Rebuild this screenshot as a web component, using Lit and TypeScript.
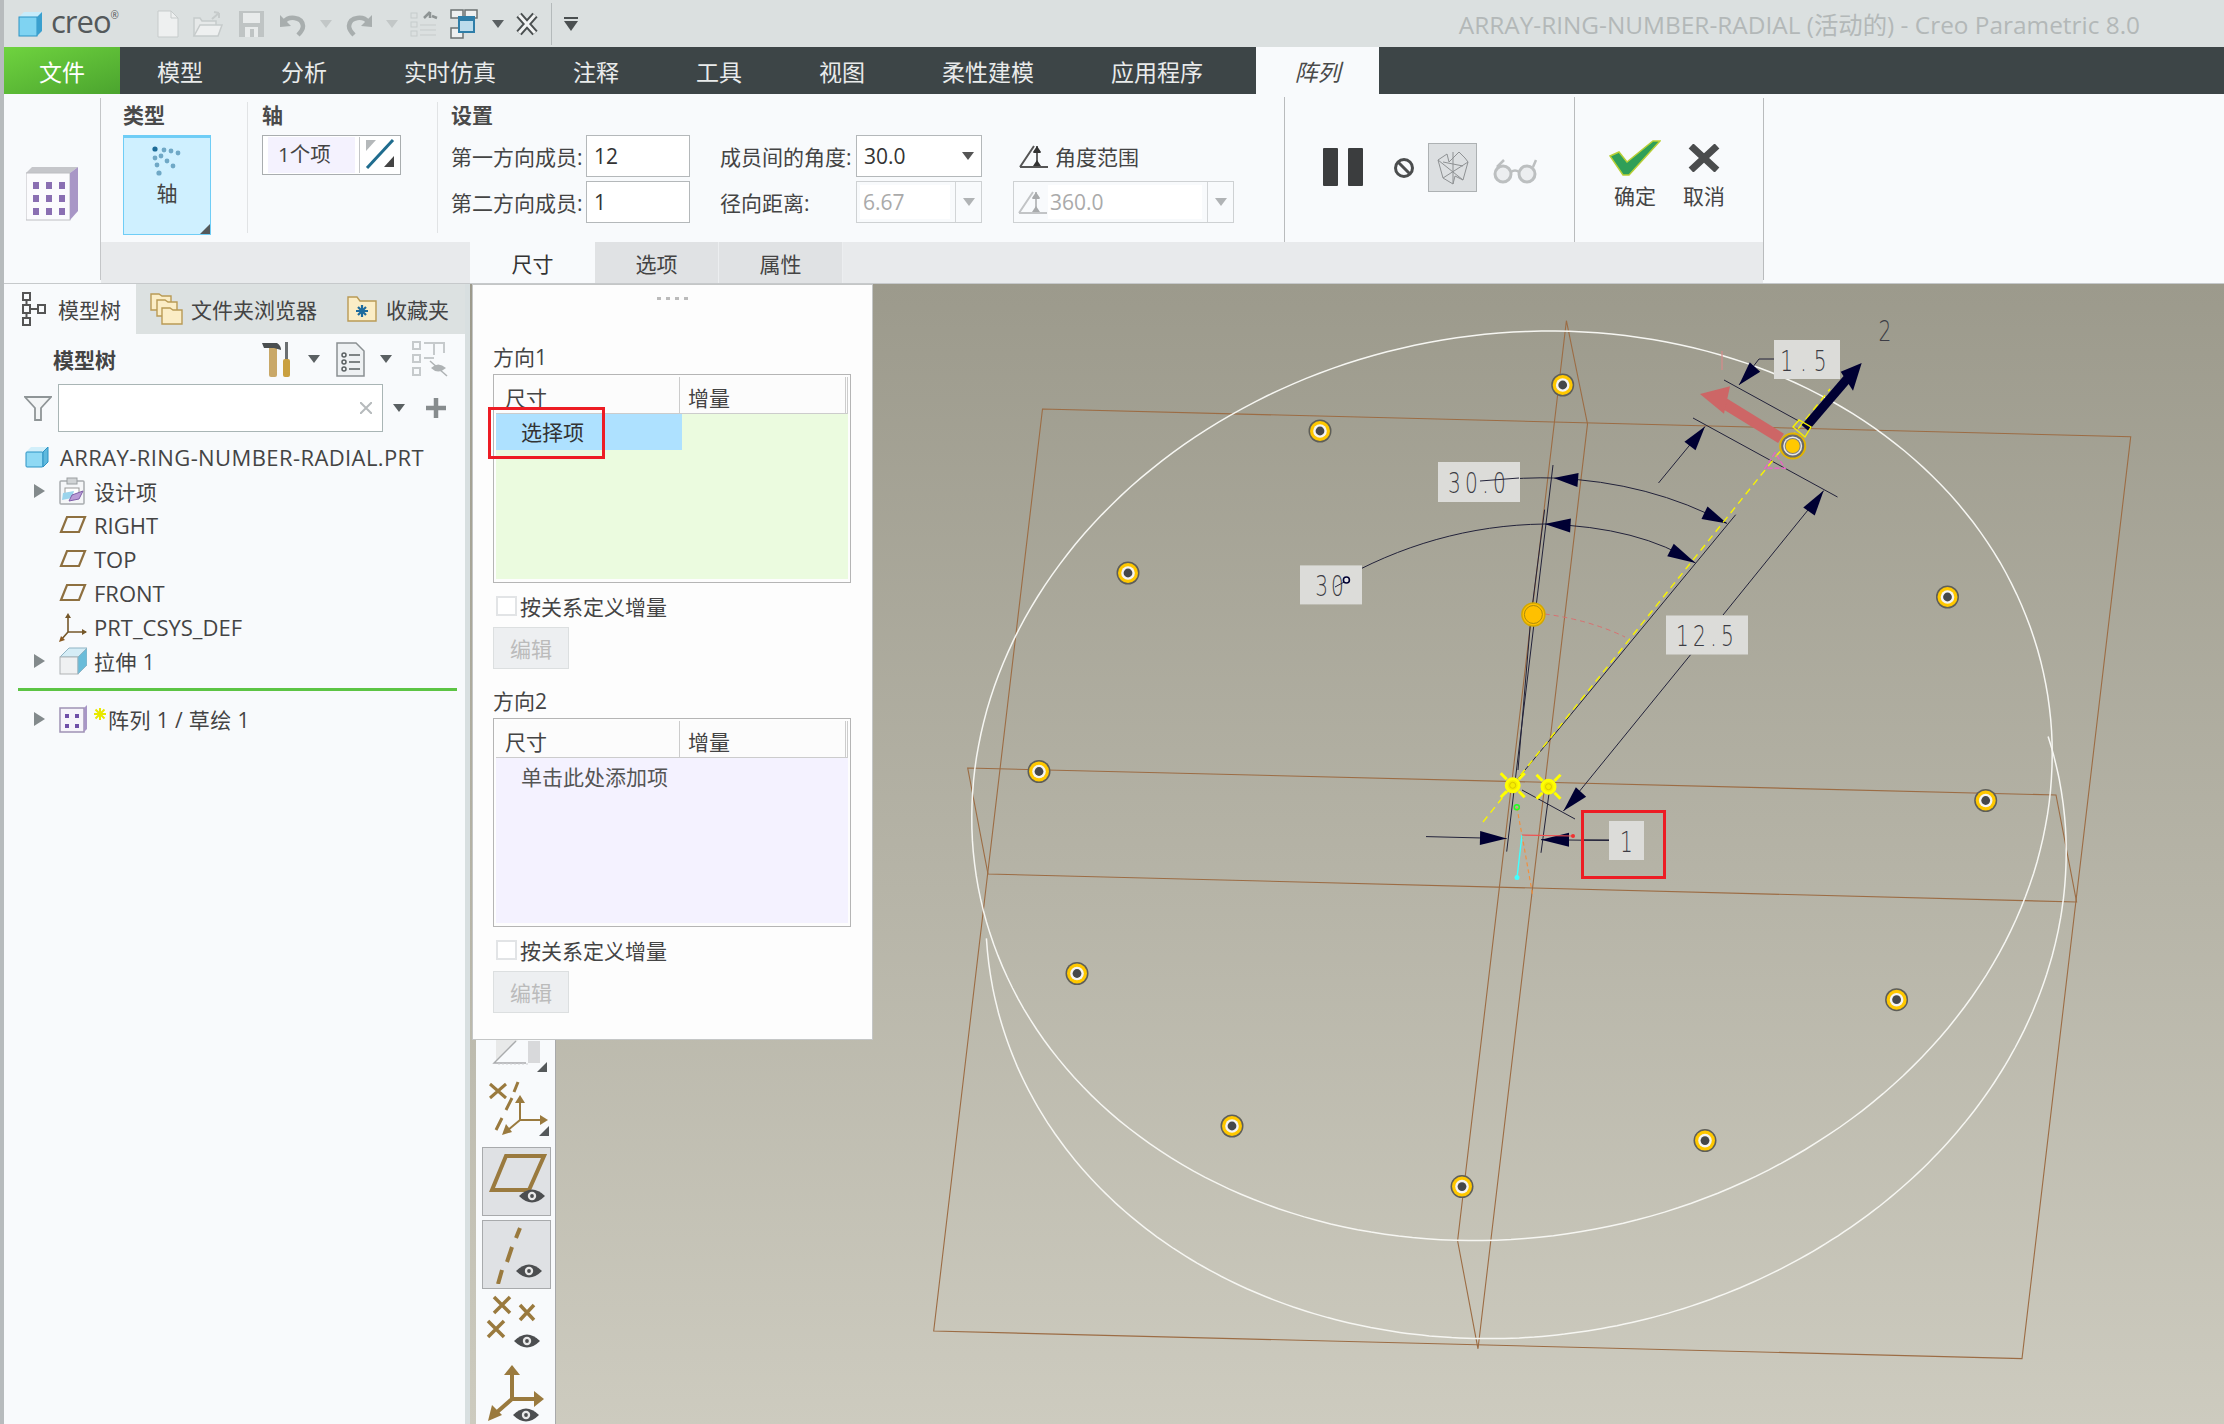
import { LitElement, html, svg, css } from "lit";
import { customElement } from "lit/decorators.js";

const C = { x: 1512, y: 785.8 };
const U = { x: 473.7, y: 14.7 };
const V = { x: 50.7, y: -400.8 };
const ellipse = (dx: number, dy: number, k: number, t0: number, t1: number) => {
  const pts: string[] = [];
  const n = 240;
  for (let i = 0; i <= n; i++) {
    const t = ((t0 + ((t1 - t0) * i) / n) * Math.PI) / 180;
    const x = C.x + dx + k * (U.x * Math.cos(t) + V.x * Math.sin(t));
    const y = C.y + dy + k * (U.y * Math.cos(t) + V.y * Math.sin(t));
    pts.push(`${x.toFixed(1)},${y.toFixed(1)}`);
  }
  return pts.join(" ");
};
const DOTS: [number, number][] = [
  [1562.7, 385], [1320, 431], [1128, 573], [1039, 771.5], [1077, 973.5], [1232, 1126],
  [1462, 1186.6], [1705, 1140.6], [1896.6, 999.7], [1985.7, 800.5], [1947.5, 597],
];
const marker = (x: number, y: number) => svg`<g>
  <circle cx=${x} cy=${y} r="11.5" fill="#5e5e58"/><circle cx=${x} cy=${y} r="10" fill="#ffc800"/>
  <circle cx=${x} cy=${y} r="6.8" fill="#f4f4f4"/><circle cx=${x} cy=${y} r="4.4" fill="#45474a"/></g>`;
const label = (x: number, y: number, w: number, h: number, t: string, sp = 6) => svg`
  <rect x=${x} y=${y} width=${w} height=${h} fill="#dcdcd9"/>
  <text class="dim" transform="translate(${x + w / 2} ${y + h / 2 + 11}) scale(.72 1)" text-anchor="middle" letter-spacing=${sp}>${t}</text>`;
const arrowHead = (tx: number, ty: number, bx: number, by: number, w: number, fill = "#000033") => {
  const dx = bx - tx, dy = by - ty, l = Math.hypot(dx, dy);
  const nx = (-dy / l) * w, ny = (dx / l) * w;
  return svg`<polygon fill=${fill} points="${tx},${ty} ${bx + nx},${by + ny} ${bx - nx},${by - ny}"/>`;
};
const star = (x: number, y: number) => svg`<g stroke="#ffff00" stroke-width="3" fill="none">
  <path d="M${x - 12} ${y - 12}L${x - 6} ${y - 6}M${x + 12} ${y - 12}L${x + 6} ${y - 6}M${x - 12} ${y + 12}L${x - 6} ${y + 6}M${x + 12} ${y + 12}L${x + 6} ${y + 6}"/>
  <circle cx=${x} cy=${y} r="6.5" fill="#f6ee00" stroke="#ffff00"/><circle cx=${x} cy=${y} r="3" fill="none" stroke="#d9c800" stroke-width="1"/></g>`;
const eye = (x: number, y: number) => svg`<g>
  <path d="M${x - 13} ${y}Q${x} ${y - 13} ${x + 13} ${y}Q${x} ${y + 13} ${x - 13} ${y}Z" fill="#4c4e50"/>
  <circle cx=${x} cy=${y} r="4.2" fill="#e8e8e8"/><circle cx=${x} cy=${y} r="1.9" fill="#4c4e50"/></g>`;
const tri = (w = 12, h = 8, fill = "#5a6062") => html`<svg class="ic" width=${w} height=${h} viewBox="0 0 12 8"><polygon points="0,0 12,0 6,8" fill=${fill}/></svg>`;
const corner = svg`<polygon points="10,0 10,10 0,10" fill="#55595b"/>`;

const planeIcon = html`<svg class="ic" width="28" height="20" viewBox="0 0 28 20"><polygon points="8,2 26,2 20,17 2,17" fill="none" stroke="#8e7040" stroke-width="2.2"/></svg>`;
const angleIcon = (c: string, c2: string) => html`<svg class="ic" width="30" height="26" viewBox="0 0 30 26">
  <path d="M1 24L15 3M1 24H29M15 3" stroke=${c} stroke-width="2" fill="none"/><path d="M18 3V23" stroke=${c2} stroke-width="1.5"/>
  <polygon points="18,9 14,3 22,3" transform="rotate(180 18 6)" fill=${c2}/><polygon points="18,17 14,23 22,23" fill=${c2}/><polygon points="18,4 14,10 22,10" fill=${c2}/></svg>`;

@customElement("app-root")
export class AppRoot extends LitElement {
  static styles = css`
    :host { display: block; width: 2224px; height: 1424px; overflow: hidden; position: relative;
      font-family: "Open Sans", "Noto Sans CJK SC", sans-serif; color: #444; font-size: 21px; background: #f8fafc; }
    * { box-sizing: border-box; }
    .ic { display: block; flex: none; }
    .shell { display: flex; flex-direction: column; height: 1424px; border-left: 4px solid #b7bbbd; }
    .title { height: 47px; background: #dbe0e0; display: flex; align-items: center; gap: 12px; padding-left: 14px; flex: none; }
    .logo { display: flex; align-items: center; gap: 7px; width: 118px; margin-right: 8px; }
    .creo { font-size: 31px; letter-spacing: -1px; color: #54595b; line-height: 1; font-family: "Open Sans", sans-serif; margin-top: -5px; }
    .creo sup { font-size: 10px; vertical-align: 14px; }
    .qsep { width: 1px; height: 42px; background: #b4babb; margin: 0 0 0 1px; }
    .doc-title { margin-left: auto; padding-right: 84px; color: #b3b8b8; font-size: 24.4px; }
    .tabs { height: 47px; background: #3d4547; display: flex; flex: none; }
    .tab { display: flex; align-items: center; justify-content: center; color: #e9ebeb; font-size: 23px; }
    .tab.file { background: linear-gradient(160deg, #6fd33f, #4ba42e); color: #fff; }
    .tab.on { background: #f8fafc; color: #4a4a4a; font-style: italic; margin-left: 12px; }
    .ribbon { height: 190px; background: #f8fafc; display: flex; flex: none; border-bottom: 1px solid #c6c9cb; }
    .rib-icon { width: 97px; padding: 69px 0 0 22px; border-right: 1px solid #c4c6c8; margin-top: 4px; margin-bottom: 3px; }
    .rib-body { width: 1662px; display: flex; flex-direction: column; }
    .rib-end { border-left: 1px solid #b9bbbd; margin: 4px 0 3px; flex: 1; }
    .groups { height: 148px; display: flex; }
    .g { padding-top: 9px; position: relative; }
    .g h4 { margin: 0; font-size: 21px; font-weight: 700; line-height: 24px; color: #4a4a4a; }
    .g-type { width: 146px; padding-left: 22px; }
    .typebtn { width: 88px; height: 100px; margin-top: 8px; background: #cff0ff; border: 1px solid #6fcdf6; border-top-width: 3px; display: flex; flex-direction: column; align-items: center; padding-top: 8px; position: relative; }
    .typebtn span { margin-top: 4px; font-size: 21px; line-height: 26px; }
    .typebtn .c { position: absolute; right: 0; bottom: 0; }
    .g-axis, .g-set { margin: 8px 0 9px; padding-top: 1px; border-left: 1px solid #e1e3e5; }
    .g-axis { width: 190px; padding-left: 14px; }
    .axisbox { margin-top: 8px; width: 139px; height: 40px; border: 1px solid #a9adaf; display: flex; padding: 1px; background: #fff; align-items: center; }
    .axisval { width: 88px; height: 36px; margin-left: 4px; background: #f4f2fe; padding-left: 10px; line-height: 34px; font-size: 20.5px; }
    .axisicon { border-left: 1px solid #c4c6c8; width: 40px; height: 36px; margin-left: 4px; padding: 2px 0 0 5px; }
    .g-set { width: 847px; padding-left: 13px; }
    .grid { display: grid; grid-template-columns: 135px 104px 166px 126px 252px; grid-auto-rows: 42px; row-gap: 4px; margin-top: 8px; }
    .lab { display: flex; align-items: center; white-space: nowrap; }
    .lab.m1 { padding-left: 30px; }
    .lab.m2 { padding-left: 37px; gap: 6px; }
    .inp { border: 1px solid #b4b8ba; background: #fff; display: flex; align-items: center; padding-left: 7px; font-size: 21px; color: #333; }
    .inp.sel { justify-content: space-between; padding-right: 7px; }
    .inp.dis { color: #aaa; border-color: #ced1d3; background: #f8fafc; padding: 0; }
    .inner { background: #fff; height: 34px; display: flex; align-items: center; margin-left: 3px; padding-left: 3px; flex: 1; }
    .carr { width: 26px; height: 100%; border-left: 1px solid #d2d5d7; margin-left: 5px; display: flex; align-items: center; justify-content: center; }
    .inp.dis.rangebox { margin-left: 31px; width: 221px; }
    .rangebox .pre { margin-left: 4px; }
    .rangebox .inner { margin-left: 0; padding-left: 2px; }
    .g-act { width: 290px; margin: 3px 0 0; border-left: 1px solid #b9bbbd; display: flex; align-items: flex-start; }
    .pause { margin: 51px 0 0 38px; }
    .nope { margin: 60px 0 0 30px; }
    .hl { margin: 46px 0 0 13px; width: 49px; height: 49px; background: #dcdfe1; border: 1px solid #adb1b3; display: flex; align-items: center; justify-content: center; }
    .glass { margin: 61px 0 0 15px; }
    .g-ok { flex: 1; margin: 3px 0 0; border-left: 1px solid #b9bbbd; display: flex; padding-left: 30px; gap: 9px; }
    .okc { width: 60px; display: flex; flex-direction: column; align-items: center; }
    .okc .b { height: 49px; margin-top: 36px; display: flex; align-items: center; }
    .okc span { margin-top: 0; line-height: 28px; }
    .strip { height: 41px; background: #e8eaec; padding-left: 369px; display: flex; }
    .st { width: 124px; display: flex; align-items: center; justify-content: center; background: #e0e2e4; border-right: 1px solid #eceef0; }
    .st.on { background: #f8fafc; border: 0; width: 125px; color: #333; }
    .main { flex: 1; display: flex; min-height: 0; }
    .side { width: 466px; flex: none; display: flex; border-right: 5px solid #d8dfe0; }
    .sidein { width: 461px; background: #f8fafc; position: relative; }
    .ptabs { height: 50px; display: flex; background: #dce1e1; }
    .ptab { display: flex; align-items: center; gap: 12px; white-space: nowrap; }
    .ptab.a { width: 132px; background: #f8fafc; padding-left: 18px; }
    .ptab.b { width: 197px; padding-left: 14px; gap: 7px; }
    .ptab.c { padding-left: 14px; gap: 9px; }
    .tools { height: 50px; display: flex; align-items: center; padding-left: 49px; }
    .tools b { width: 209px; font-size: 21px; font-weight: 700; }
    .tools .t1 { margin-left: 0; } .tools .t2 { margin-left: 16px; } .tools .t3 { margin-left: 16px; } .tools .t4 { margin-left: 15px; } .tools .t5 { margin-left: 20px; }
    .filter { display: flex; align-items: center; padding-left: 20px; height: 48px; }
    .search { width: 325px; height: 48px; border: 1px solid #a9b5b5; background: #fff; margin-left: 6px; display: flex; align-items: center; justify-content: flex-end; padding-right: 10px; margin-right: 10px; }
    .plus { margin-left: 21px; }
    .tree { margin-top: 8px; }
    .row { height: 34px; display: flex; align-items: center; white-space: nowrap; }
    .row .ar { width: 55px; padding-left: 29px; flex: none; }
    .row .i { width: 35px; flex: none; }
    .row.root { padding-left: 21px; gap: 11px; }
    .lat { font-size: 22px; }
    .lat.wide { letter-spacing: .4px; }
    .feat { letter-spacing: .4px; }
    .hr { height: 3px; background: #5cc444; margin: 10px 8px 11px 14px; }
    .yst { margin-right: 2px; align-self: flex-start; margin-top: 6px; }
    .vp { flex: 1; position: relative; background: linear-gradient(#9c9a8c, #cdcbbf); overflow: hidden; }
    .canvas { position: absolute; left: 0; top: 0; }
    .dim { font-family: "DejaVu Sans", sans-serif; font-weight: 200; font-size: 28px; fill: #3c3c44; }
    .vbar { position: absolute; left: 6px; top: 0; width: 80px; bottom: 0; background: #f8fafc; padding: 756px 0 0 6px; border-right: 1px solid #a8a9aa; }
    .vb { width: 69px; height: 69px; display: flex; align-items: center; justify-content: center; }
    .vb.on { background: #dfe1e4; border: 1px solid #a8aaac; margin-bottom: 4px; }
    .vb.top { height: 40px; align-items: flex-start; }
    .vb.pts { height: 60px; margin-bottom: 7px; }
    .vb.three { height: 66px; margin: 3px 0 6px; }
    .vb.csys { height: 60px; }
    .popup { position: absolute; left: 2px; top: 0; width: 401px; height: 756px; background: #fdfdfd; border: 1px solid #c4c6c6; padding: 0 20px; }
    .grip { display: flex; gap: 5px; justify-content: center; padding-top: 12px; height: 61px; }
    .grip i { width: 4px; height: 3px; background: #bbb; }
    .dlab { line-height: 22px; }
    .tbl { height: 209px; width: 358px; border: 1px solid #b5b5b5; margin-top: 6px; padding: 2px 2px 3px; display: flex; flex-direction: column; }
    .thead { height: 37px; display: flex; background: #fcfcfc; border-bottom: 1px solid #ccc; flex: none; line-height: 42px; }
    .thead div:first-child { width: 184px; padding-left: 9px; border-right: 1px solid #ccc; }
    .thead div:nth-child(2) { flex: 1; padding-left: 8px; border-right: 3px double #ccc; }
    .tbody { flex: 1; }
    .tbody.g1 { background: #ebfbdf; }
    .tbody.g2 { background: #f4f2ff; padding: 7px 0 0 25px; line-height: 24px; color: #555; }
    .seld { width: 186px; height: 36px; background: #aee1ff; padding-left: 25px; line-height: 37px; color: #333; }
    .redbox { position: absolute; left: 15px; top: 122px; width: 117px; height: 52px; border: 3px solid #ed1c24; }
    .chk { display: flex; align-items: center; gap: 3px; height: 22px; margin-top: 12px; padding-left: 3px; }
    .chk i { width: 21px; height: 20px; background: #fff; border: 2px solid #e2e4e6; }
    .btn { width: 76px; height: 42px; background: #edeff1; border: 1px solid #dcdfe0; color: #bbb; display: flex; align-items: center; justify-content: center; margin-top: 10px; margin-bottom: 21px; }
  `;

  render() {
    const tabs: [string, number][] = [["模型", 120], ["分析", 128], ["实时仿真", 164], ["注释", 128], ["工具", 118], ["视图", 128], ["柔性建模", 164], ["应用程序", 174]];
    return html`<div class="shell">
      ${this.titleBar()}
      <div class="tabs">
        <div class="tab file" style="width:116px">文件</div>
        ${tabs.map(([t, w]) => html`<div class="tab" style="width:${w}px">${t}</div>`)}
        <div class="tab on" style="width:123px">阵列</div>
      </div>
      ${this.ribbon()}
      <div class="main">
        ${this.side()}
        <div class="vp">
          ${this.canvas()}
          ${this.vbar()}
          ${this.popup()}
        </div>
      </div>
    </div>`;
  }

  titleBar() {
    const g = "#c6cbcb", g2 = "#a8aeae";
    return html`<div class="title">
      <div class="logo">
        <svg class="ic" width="26" height="26" viewBox="0 0 26 26"><polygon points="1,6 6,1 24,1 19,6" fill="#c7ecfb"/><rect x="1" y="6" width="18" height="19" fill="#7fd3f2" stroke="#2d93c4"/><polygon points="19,6 24,1 24,20 19,25" fill="#3aa0cf"/></svg>
        <span class="creo">creo<sup>®</sup></span>
      </div>
      <svg class="ic" width="24" height="28" viewBox="0 0 24 28"><path d="M2 1H15L22 8V27H2Z" fill="#eef0f0" stroke=${g}/><path d="M15 1V8H22" fill="none" stroke=${g}/></svg>
      <svg class="ic" width="34" height="28" viewBox="0 0 34 28"><path d="M2 26V8H8L10 11H24V15" fill="#e6e9e9" stroke=${g} stroke-width="1.5"/><path d="M2 26L8 15H30L26 26Z" fill="#eef0f0" stroke=${g} stroke-width="1.5"/><path d="M20 9L27 3M27 3L22 2M27 3V8" stroke=${g} stroke-width="2" fill="none"/></svg>
      <svg class="ic" width="28" height="28" viewBox="0 0 28 28"><rect x="1" y="1" width="25" height="26" fill="#bfc4c4"/><rect x="5" y="3" width="17" height="10" fill="#e8ebeb"/><rect x="7" y="17" width="13" height="10" fill="#e8ebeb"/><rect x="12" y="19" width="4" height="8" fill="#bfc4c4"/></svg>
      <svg class="ic" width="30" height="28" viewBox="0 0 30 28"><path d="M6 12C10 6 24 6 25 16C25 20 22 23 20 25" fill="none" stroke=${g2} stroke-width="4.5"/><polygon points="2,5 13,16 2,17" fill=${g2}/></svg>
      ${tri(12, 8, "#c2c7c7")}
      <svg class="ic" width="30" height="28" viewBox="0 0 30 28"><path d="M24 12C20 6 6 6 5 16C5 20 8 23 10 25" fill="none" stroke=${g2} stroke-width="4.5"/><polygon points="28,5 17,16 28,17" fill=${g2}/></svg>
      ${tri(12, 8, "#c2c7c7")}
      <svg class="ic" width="28" height="28" viewBox="0 0 28 28"><g fill="none" stroke=${g}><rect x="1" y="3" width="6" height="5"/><rect x="1" y="12" width="6" height="5"/><rect x="1" y="21" width="6" height="5"/><path d="M10 15H26M10 20H26M10 25H26"/></g><path d="M14 8L20 2M20 2V8M22 6L27 8" stroke="#8e9494" stroke-width="2.5" fill="none"/></svg>
      <svg class="ic" width="30" height="30" viewBox="0 0 30 30"><g fill="#eef0f0" stroke="#6c7272" stroke-width="1.5"><rect x="1" y="1" width="12" height="8"/><rect x="15" y="1" width="12" height="8"/><rect x="1" y="19" width="12" height="10"/></g><rect x="9" y="8" width="15" height="15" fill="#bcdcec" stroke="#2f7ea8" stroke-width="2"/><rect x="9" y="8" width="15" height="4" fill="#2f7ea8"/></svg>
      ${tri(12, 8)}
      <svg class="ic" width="22" height="26" viewBox="0 0 22 26"><path d="M3 4L19 22M19 4L3 22" stroke="#4a4f50" stroke-width="7"/><path d="M3 4L19 22M19 4L3 22" stroke="#f2f4f4" stroke-width="3"/></svg>
      <div class="qsep"></div>
      <svg class="ic" width="14" height="16" viewBox="0 0 14 16"><rect y="1" width="14" height="2" fill="#4a4f50"/><polygon points="0,5 14,5 7,15" fill="#4a4f50"/></svg>
      <div class="doc-title">ARRAY-RING-NUMBER-RADIAL (活动的) - Creo Parametric 8.0</div>
    </div>`;
  }

  ribbon() {
    return html`<div class="ribbon">
      <div class="rib-icon">
        <svg class="ic" width="52" height="54" viewBox="0 0 52 54"><polygon points="0,6 6,0 52,0 44,6" fill="#c5c6ca"/><rect x="0" y="6" width="44" height="47" fill="#fbfbfd" stroke="#bdbec2"/><polygon points="44,6 52,0 52,44 44,53" fill="#a896c6"/>
          ${[0, 1, 2].map(r => [0, 1, 2].map(c => svg`<rect x=${7 + c * 13} y=${15 + r * 13} width="6" height="7" fill="#8a6fb2"/>`))}</svg>
      </div>
      <div class="rib-body">
        <div class="groups">
          <div class="g g-type"><h4>类型</h4>
            <div class="typebtn">
              <svg class="ic" width="30" height="30" viewBox="0 0 30 30"><g fill="#6fa8c6">
                <circle cx="3" cy="3" r="2.6" fill="#1b6b98"/><circle cx="12" cy="4" r="2.4"/><circle cx="19" cy="5" r="2.4"/><circle cx="26" cy="7" r="2.4"/>
                <circle cx="3" cy="12" r="2.4"/><circle cx="9" cy="10" r="2.4"/><circle cx="15" cy="15" r="2.4"/><circle cx="21" cy="20" r="2.4"/><circle cx="5" cy="19" r="2.4"/><circle cx="7" cy="27" r="2.6"/></g></svg>
              <span>轴</span>
              <svg class="ic c" width="10" height="10" viewBox="0 0 10 10">${corner}</svg>
            </div>
          </div>
          <div class="g g-axis"><h4>轴</h4>
            <div class="axisbox"><div class="axisval">1个项</div><div class="axisicon">
              <svg class="ic" width="30" height="30" viewBox="0 0 30 30"><path d="M28 1L2 29" stroke="#1f6c8e" stroke-width="3"/><polygon points="1,1 11,1 1,12" fill="#b4b8ba"/><polygon points="29,28 19,28 29,17" fill="#444"/></svg>
            </div></div>
          </div>
          <div class="g g-set"><h4>设置</h4>
            <div class="grid">
              <div class="lab">第一方向成员:</div><div class="inp">12</div>
              <div class="lab m1">成员间的角度:</div><div class="inp sel">30.0 ${tri(12, 8, "#555")}</div>
              <div class="lab m2">${angleIcon("#555", "#333")}角度范围</div>
              <div class="lab">第二方向成员:</div><div class="inp">1</div>
              <div class="lab m1">径向距离:</div>
              <div class="inp dis"><div class="inner">6.67</div><div class="carr">${tri(12, 8, "#b0b3b5")}</div></div>
              <div class="inp dis rangebox"><div class="pre">${angleIcon("#c2c4c6", "#a8aaac")}</div><div class="inner">360.0</div><div class="carr">${tri(12, 8, "#b0b3b5")}</div></div>
            </div>
          </div>
          <div class="g-act">
            <svg class="ic pause" width="40" height="38" viewBox="0 0 40 38"><rect width="15" height="38" rx="1" fill="#3b3d3e"/><rect x="25" width="15" height="38" rx="1" fill="#3b3d3e"/></svg>
            <svg class="ic nope" width="22" height="22" viewBox="0 0 22 22"><circle cx="11" cy="11" r="8.5" fill="none" stroke="#4b4d4e" stroke-width="3"/><path d="M5 5L17 17" stroke="#4b4d4e" stroke-width="3"/></svg>
            <div class="hl"><svg class="ic" width="36" height="36" viewBox="0 0 36 36"><g fill="none" stroke="#8e9193" stroke-width="1"><path d="M3 10L12 4L14 12L24 2L30 8L33 12L28 30L20 26L18 34L8 28Z"/><path d="M3 10L28 30M33 12L8 28M18 2V34M8 12L28 16"/></g></svg></div>
            <svg class="ic glass" width="46" height="26" viewBox="0 0 46 26"><g fill="#eceef0" stroke="#bcbfc0" stroke-width="3"><circle cx="11" cy="16" r="8"/><circle cx="35" cy="16" r="8"/></g><path d="M19 14Q23 11 27 14M5 9L12 2M41 9L44 2" stroke="#bcbfc0" stroke-width="2.5" fill="none"/></svg>
          </div>
          <div class="g-ok">
            <div class="okc"><div class="b"><svg class="ic" width="52" height="36" viewBox="0 0 52 36"><polygon points="1,16 10,12 18,22 44,1 51,1 20,35 14,35" fill="#2f9f58" stroke="#b8cf35" stroke-width="1.5"/></svg></div><span>确定</span></div>
            <div class="okc"><div class="b"><svg class="ic" width="34" height="28" viewBox="0 0 34 28"><path d="M4 2L30 26M30 2L4 26" stroke="#4a4c4d" stroke-width="7"/></svg></div><span>取消</span></div>
          </div>
        </div>
        <div class="strip"><div class="st on">尺寸</div><div class="st">选项</div><div class="st">属性</div></div>
      </div>
      <div class="rib-end"></div>
    </div>`;
  }

  side() {
    const fold = (x: number, y: number, c = "#fbedc6") => svg`<path d="M${x} ${y + 18}V${y + 2}H${x + 8}L${x + 11} ${y + 4}H${x + 20}V${y + 18}Z" fill=${c} stroke="#b99a55" stroke-width="1.4"/>`;
    const ar = html`<svg class="ic" width="13" height="16" viewBox="0 0 13 16"><polygon points="1,1 12,8 1,15" fill="#838a8c"/></svg>`;
    return html`<div class="side"><div class="sidein">
      <div class="ptabs">
        <div class="ptab a"><svg class="ic" width="24" height="34" viewBox="0 0 24 34"><g fill="none" stroke="#555" stroke-width="2"><rect x="1" y="1" width="7" height="7"/><rect x="1" y="13" width="7" height="8"/><rect x="16" y="13" width="7" height="8"/><rect x="1" y="26" width="7" height="7"/><path d="M4.5 8V13M4.5 21V26M8 17H16"/></g></svg>模型树</div>
        <div class="ptab b"><svg class="ic" width="34" height="34" viewBox="0 0 34 34">${fold(1, 0)}${fold(7, 6)}${fold(12, 14)}</svg>文件夹浏览器</div>
        <div class="ptab c"><svg class="ic" width="30" height="28" viewBox="0 0 30 28"><path d="M1 26V2H10L13 6H29V26Z" fill="#fbedc6" stroke="#b99a55" stroke-width="1.4"/><path d="M15 10V22M9 16H21M11 12L19 20M19 12L11 20" stroke="#1f6c9e" stroke-width="2.2"/></svg>收藏夹</div>
      </div>
      <div class="tools">
        <b>模型树</b>
        <svg class="ic t1" width="30" height="36" viewBox="0 0 30 36"><rect x="7" y="5" width="8" height="31" rx="2" fill="#c9a868"/><path d="M0 2H15C18 4 19 6 19 9L12 7H2Z" fill="#4a4e50"/><rect x="23" y="1" width="3" height="17" fill="#6c7072"/><rect x="21" y="18" width="7" height="18" rx="2" fill="#c9a040"/></svg>
        <span class="t2">${tri(12, 8)}</span>
        <svg class="ic t3" width="29" height="35" viewBox="0 0 29 35"><path d="M1 1H20L28 9V34H1Z" fill="#eef1f3" stroke="#8a9092" stroke-width="1.5"/><g stroke="#5a6062" stroke-width="1.5" fill="none"><circle cx="8" cy="13" r="2"/><circle cx="8" cy="20" r="2"/><circle cx="8" cy="27" r="2"/><path d="M13 13H24M13 20H24M13 27H24"/></g></svg>
        <span class="t4">${tri(12, 8)}</span>
        <svg class="ic t5" width="36" height="36" viewBox="0 0 36 36"><g fill="none" stroke="#c6cacc" stroke-width="2"><rect x="1" y="1" width="7" height="7"/><rect x="1" y="14" width="7" height="7"/><rect x="1" y="27" width="7" height="7"/><path d="M12 2H32V12M22 2V14M12 17H22"/></g><path d="M18 20L35 35" stroke="#aeb2b4" stroke-width="1.5"/><path d="M19 27Q26 20 34 27Q26 34 19 27Z" fill="#aeb2b4"/></svg>
      </div>
      <div class="filter">
        <svg class="ic" width="28" height="25" viewBox="0 0 28 25"><path d="M1 1H27L17 12V24H11V12Z" fill="#f3f5f6" stroke="#8f9597" stroke-width="1.8"/></svg>
        <div class="search"><svg class="ic" width="12" height="12" viewBox="0 0 12 12"><path d="M0 0L12 12M12 0L0 12" stroke="#b6babc" stroke-width="2"/></svg></div>
        ${tri(12, 8)}
        <svg class="ic plus" width="20" height="20" viewBox="0 0 20 20"><path d="M10 0V20M0 10H20" stroke="#878c8e" stroke-width="4.5"/></svg>
      </div>
      <div class="tree">
        <div class="row root"><svg class="ic" width="24" height="22" viewBox="0 0 24 22"><polygon points="1,6 6,1 23,1 18,6" fill="#d2effa"/><rect x="1" y="6" width="17" height="15" rx="1" fill="#8fd9f4" stroke="#2d93c4"/><polygon points="18,6 23,1 23,16 18,21" fill="#5fb9dd" stroke="#2d93c4"/></svg><span class="lat wide">ARRAY-RING-NUMBER-RADIAL.PRT</span></div>
        <div class="row"><div class="ar">${ar}</div><div class="i"><svg class="ic" width="26" height="28" viewBox="0 0 26 28"><rect x="1" y="4" width="24" height="23" rx="1" fill="#f5f6f8" stroke="#a8acae" stroke-width="1.5"/><rect x="8" y="1" width="10" height="6" fill="#d0d3d5" stroke="#9a9ea0"/><rect x="6" y="11" width="14" height="8" fill="#fff" stroke="#999"/><polygon points="4,16 15,14 13,21 3,23" fill="#9bd4ec"/><polygon points="13,18 24,14 20,22 10,24" fill="#b99bd6" stroke="#7f5fa8"/></svg></div>设计项</div>
        <div class="row"><div class="ar"></div><div class="i">${planeIcon}</div><span class="lat">RIGHT</span></div>
        <div class="row"><div class="ar"></div><div class="i">${planeIcon}</div><span class="lat">TOP</span></div>
        <div class="row"><div class="ar"></div><div class="i">${planeIcon}</div><span class="lat">FRONT</span></div>
        <div class="row"><div class="ar"></div><div class="i"><svg class="ic" width="28" height="29" viewBox="0 0 28 29"><path d="M9 3V19M9 19H27M9 19L2 27" stroke="#75582a" stroke-width="1.6" fill="none"/><polygon points="9,0 6,5 12,5" fill="#75582a"/><polygon points="28,19 23,16 23,22" fill="#75582a"/><polygon points="0,29 6,27 2,23" fill="#8a5a22"/></svg></div><span class="lat">PRT_CSYS_DEF</span></div>
        <div class="row"><div class="ar">${ar}</div><div class="i"><svg class="ic" width="28" height="28" viewBox="0 0 28 28"><polygon points="1,10 10,1 28,1 19,10" fill="#d5edf6" stroke="#8fb4c4"/><rect x="1" y="10" width="18" height="17" fill="#eff1f2" stroke="#b0b3b5"/><polygon points="19,10 28,1 28,18 19,27" fill="#69bcd9" stroke="#8fb4c4"/></svg></div><span class="feat">拉伸 1</span></div>
        <div class="hr"></div>
        <div class="row"><div class="ar">${ar}</div><div class="i"><svg class="ic" width="28" height="28" viewBox="0 0 28 28"><rect x="1" y="3" width="24" height="24" fill="#f6f4fa" stroke="#9f92b4" stroke-width="1.5"/><polygon points="25,3 28,0 28,24 25,27" fill="#a896c6"/>${[0, 1].map(r => [0, 1].map(c => svg`<rect x=${6 + c * 10} y=${9 + r * 10} width="4" height="4" fill="#6f4fa8"/>`))}</svg></div>
          <svg class="ic yst" width="12" height="12" viewBox="0 0 12 12"><path d="M6 0V12M0 6H12M1.5 1.5L10.5 10.5M10.5 1.5L1.5 10.5" stroke="#e8e800" stroke-width="2"/></svg><span class="feat">阵列 1 / 草绘 1</span></div>
      </div>
    </div></div>`;
  }

  canvas() {
    const brown = "#9c6c44";
    const dk = "#22223a";
    return html`<svg class="canvas" width="1754" height="1140" viewBox="470 284 1754 1140">
      <g fill="none" stroke=${brown} stroke-width="1.1">
        <polygon points="1042.5,409 2130.7,436.7 2022,1358.6 933.7,1331"/>
        <polygon points="967.7,768 2056,795 2076.6,902 988,874"/>
        <polygon points="1566.4,320.7 1587.5,424 1478,1348.8 1457.6,1240.8"/>
      </g>
      <g fill="none" stroke="#f6f6f2" stroke-width="1.5">
        <polyline points=${ellipse(0, 0, 1.134, 0, 360)}/>
        <polyline points=${ellipse(14, 98, 1.134, 21, -171)}/>
      </g>
      ${DOTS.map(([x, y]) => marker(x, y))}
      <g fill="none" stroke=${dk} stroke-width="1">
        <path d="M1553 465L1506.7 851.6M1544.6 509.6L1531 616L1518 770"/>
        <path d="M1550 786L1541 852.8"/>
        <path d="M1735.7 514.7L1518 778.5" />
        <path d="M1724 380L1798 420.6M1693 418L1837.5 497M1522 790L1575 819"/>
        <path d="M1774.5 359H1759L1739 385M1705 426.5L1658.5 483"/>
        <path d="M1823.7 490.6L1723 615M1690.6 654.7L1563.4 811"/>
        <path d="M1426 836.6L1506.7 838.6M1541 839.7L1609.4 840.5"/>
        <path d="M1480 481Q1530 477 1553.6 478Q1650 482 1727 523.4"/>
        <path d="M1335 582.7C1400 545 1470 525 1544.6 524Q1640 527 1695.5 563"/>
      </g>
      ${arrowHead(1739, 385, 1755, 367, 7)}
      ${arrowHead(1705, 426.5, 1690, 446, 7)}
      ${arrowHead(1553.6, 478, 1578, 480, 7)}
      ${arrowHead(1727, 523.4, 1704.5, 512.7, 7)}
      ${arrowHead(1544.6, 524, 1570.5, 525.4, 7)}
      ${arrowHead(1695.5, 563, 1670.5, 550, 7)}
      ${arrowHead(1823.7, 490.6, 1809, 511.5, 7)}
      ${arrowHead(1563.4, 811, 1581, 792, 7)}
      ${arrowHead(1506.7, 838.6, 1480, 838, 7)}
      ${arrowHead(1541, 839.7, 1569, 839.7, 7)}
      <path d="M1483 822L1830 389" stroke="#f8f400" stroke-width="1.4" stroke-dasharray="7 5" fill="none"/>
      <path d="M1544.6 614Q1590 620 1625 637" stroke="#d87070" stroke-width="1" stroke-dasharray="5 4" fill="none"/>
      <path d="M1722 351V370" stroke="#d88a8a" stroke-width="1.2"/>
      <path d="M1781 438.4L1722 402" stroke="#cd6666" stroke-width="11"/>
      ${arrowHead(1700, 394, 1727, 400, 14, "#cd6666")}
      <path d="M1805 428L1847 379" stroke="#000033" stroke-width="9"/>
      <polygon points="1861.7,363 1840.7,371.7 1853,390.7" fill="#000033"/>
      <polygon points="1793,427 1799,420 1811,427 1805,437" fill="none" stroke="#f6f000" stroke-width="1.4"/>
      <polygon points="1775,452.7 1765,468.3 1785,468.3" fill="none" stroke="#e468c4" stroke-width="1.4" stroke-dasharray="5 2"/>
      <circle cx="1792.7" cy="446" r="13.5" fill="#e2b400"/><circle cx="1792.7" cy="446" r="11.5" fill="#6a6a6a"/><circle cx="1792.7" cy="446" r="9.5" fill="#e8e8e8"/><circle cx="1792.7" cy="446" r="8" fill="#808080"/><circle cx="1792.7" cy="446" r="7" fill="#ffc800"/>
      <circle cx="1533.4" cy="614.5" r="11.5" fill="#ffc000" stroke="#d2a800" stroke-width="1.5"/>
      <circle cx="1533.4" cy="614.5" r="9" fill="none" stroke="#a88a10" stroke-width="1"/>
      ${star(1512.7, 785.3)}${star(1548.5, 786.7)}
      <path d="M1516.8 807.3L1522 835L1533 897" stroke="#f09040" stroke-width="1.2" stroke-dasharray="4 3" fill="none"/>
      <circle cx="1516.8" cy="807.3" r="2.5" fill="none" stroke="#20ff20" stroke-width="1.5"/>
      <path d="M1522 835L1517 877.6" stroke="#40ffff" stroke-width="1.4"/><circle cx="1517" cy="877.6" r="2.5" fill="#40ffff"/>
      <path d="M1522 835L1573 836" stroke="#f05050" stroke-width="1.2"/><circle cx="1573" cy="836" r="2" fill="#f03030"/>
      ${label(1774, 340, 66, 39, "1.5", 10)}
      ${label(1438, 462, 82, 40, "30.0")}
      ${label(1300, 565.4, 62, 39, "30", 4)}
      ${label(1666, 615.5, 82, 39, "12.5")}
      ${label(1609, 821, 35, 39, "1", 0)}
      <path d="M1480 481L1519 478M1346 581L1335 587" stroke=${dk} stroke-width="1" fill="none"/>
      <circle cx="1346.4" cy="580" r="3" fill="#e8e8e8" stroke="#000033" stroke-width="1.6"/>
      <path d="M1581 840H1609" stroke=${dk} stroke-width="1.2"/>
      <text class="dim" transform="translate(1885 341) scale(.72 1)" text-anchor="middle">2</text>
      <rect x="1582.5" y="811.5" width="82" height="66" fill="none" stroke="#ed1c24" stroke-width="3"/>
    </svg>`;
  }

  vbar() {
    const b = "#9a7a3e";
    const axis = svg`<path d="M36 34V16M36 34H58M36 34L24 44" stroke=${b} stroke-width="2" fill="none"/><polygon points="36,9 31,17 41,17" fill=${b}/><polygon points="64,34 56,29 56,39" fill=${b}/><polygon points="18,49 28,46 22,38" fill=${b}/>`;
    return html`<div class="vbar">
      <div class="vb top">
        <svg class="ic" width="69" height="40" viewBox="0 0 69 40"><polygon points="14,0 36,0 14,22" fill="#e8e9e9"/><path d="M34 1L12 23H44" stroke="#a9abad" stroke-width="1.4" fill="none" stroke-dasharray="40 0"/><path d="M16 24H46" stroke="#cfd1d3" stroke-dasharray="2 2"/><rect x="46" y="1" width="12" height="22" fill="#d8d9db"/><g transform="translate(55 22)">${corner}</g></svg>
      </div>
      <div class="vb pts">
        <svg class="ic" width="69" height="60" viewBox="0 0 69 60"><g stroke=${b} stroke-width="3" fill="none"><path d="M8 4L24 18M24 4L8 18M36 2L32 12M30 18L24 30M20 38L14 50"/></g><g transform="translate(2 6)">${axis}</g><g transform="translate(57 46)">${corner}</g></svg>
      </div>
      <div class="vb on"><svg class="ic" width="60" height="58" viewBox="-2 0 60 58"><polygon points="17,3 55,3 40,37 3,37" fill="none" stroke=${b} stroke-width="4"/>${eye(43, 43)}</svg></div>
      <div class="vb on"><svg class="ic" width="60" height="58" viewBox="0 0 60 58"><path d="M33 2L29 12M25 21L20 36M15 44L11 58" stroke=${b} stroke-width="4" fill="none"/>${eye(42, 45)}</svg></div>
      <div class="vb three"><svg class="ic" width="66" height="62" viewBox="0 0 66 62"><g stroke=${b} stroke-width="3.5" fill="none"><path d="M10 2L26 18M26 2L10 18M36 10L50 25M50 10L36 25M4 26L20 42M20 26L4 42"/></g>${eye(43, 46)}</svg></div>
      <div class="vb csys"><svg class="ic" width="66" height="60" viewBox="0 0 66 60"><g transform="translate(0 -2)"><path d="M28 10V36M28 36H52M28 36L12 50" stroke=${b} stroke-width="4" fill="none"/><polygon points="28,2 20,12 36,12" fill=${b}/><polygon points="60,36 50,28 50,44" fill=${b}/><polygon points="4,58 18,52 8,42" fill=${b}/></g>${eye(42, 50)}</svg></div>
    </div>`;
  }

  popup() {
    const head = html`<div class="thead"><div>尺寸</div><div>增量</div></div>`;
    const chk = html`<div class="chk"><i></i>按关系定义增量</div>`;
    const btn = html`<div class="btn">编辑</div>`;
    return html`<div class="popup">
      <div class="grip"><i></i><i></i><i></i><i></i></div>
      <div class="dlab">方向1</div>
      <div class="tbl">${head}<div class="tbody g1"><div class="seld">选择项</div></div></div>
      ${chk}${btn}
      <div class="dlab">方向2</div>
      <div class="tbl">${head}<div class="tbody g2">单击此处添加项</div></div>
      ${chk}${btn}
      <div class="redbox"></div>
    </div>`;
  }
}
